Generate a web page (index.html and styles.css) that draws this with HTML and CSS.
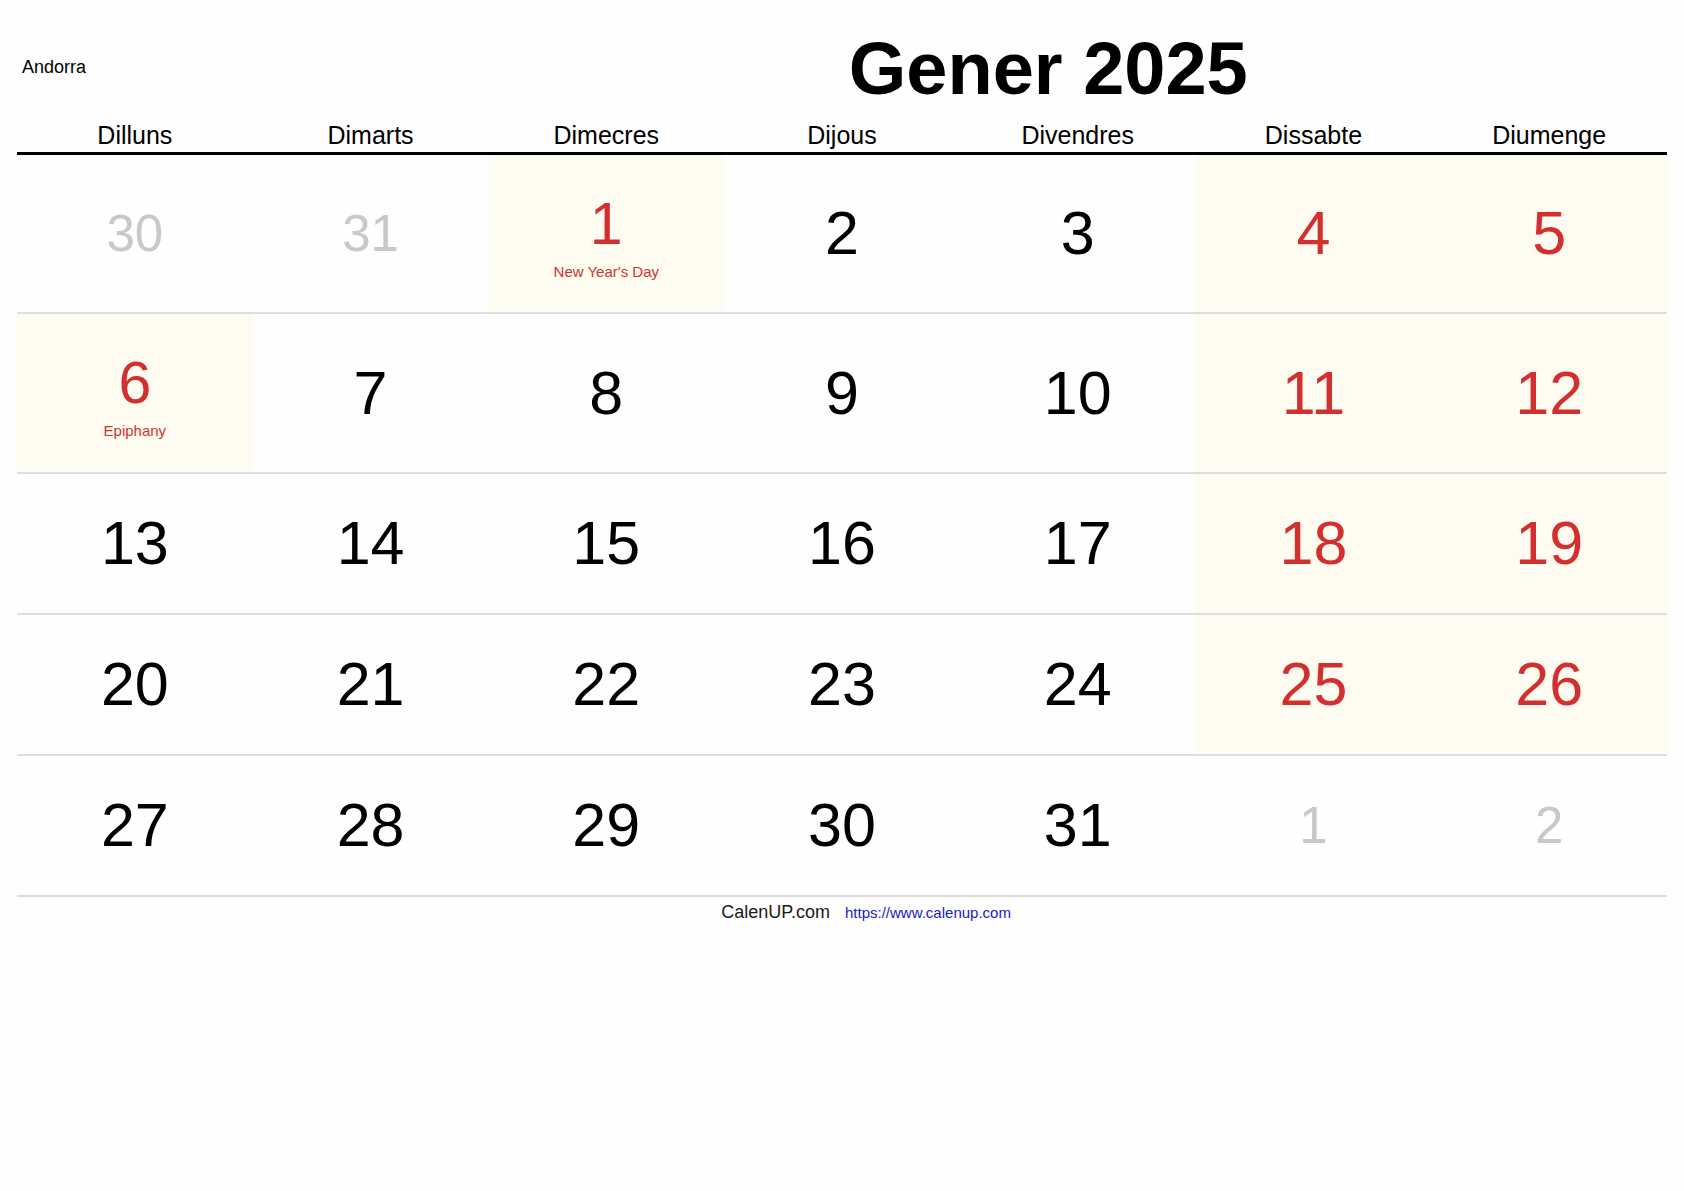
FILE: index.html
```html
<!DOCTYPE html>
<html lang="ca">
<head>
<meta charset="utf-8">
<title>Gener 2025</title>
<link rel="stylesheet" href="styles.css">
</head>
<body>
<div class="page">
  <header class="top">
    <div class="country">Andorra</div>
    <h1 class="title">Gener 2025</h1>
  </header>
  <div class="weekdays">
    <div>Dilluns</div><div>Dimarts</div><div>Dimecres</div><div>Dijous</div><div>Divendres</div><div>Dissabte</div><div>Diumenge</div>
  </div>
  <div class="week tall">
    <div class="day other"><span class="num">30</span></div>
    <div class="day other"><span class="num">31</span></div>
    <div class="day holiday"><span class="num">1</span><span class="label">New Year's Day</span></div>
    <div class="day"><span class="num">2</span></div>
    <div class="day"><span class="num">3</span></div>
    <div class="day weekend"><span class="num">4</span></div>
    <div class="day weekend"><span class="num">5</span></div>
  </div>
  <div class="week tall2">
    <div class="day holiday"><span class="num">6</span><span class="label">Epiphany</span></div>
    <div class="day"><span class="num">7</span></div>
    <div class="day"><span class="num">8</span></div>
    <div class="day"><span class="num">9</span></div>
    <div class="day"><span class="num">10</span></div>
    <div class="day weekend"><span class="num">11</span></div>
    <div class="day weekend"><span class="num">12</span></div>
  </div>
  <div class="week">
    <div class="day"><span class="num">13</span></div>
    <div class="day"><span class="num">14</span></div>
    <div class="day"><span class="num">15</span></div>
    <div class="day"><span class="num">16</span></div>
    <div class="day"><span class="num">17</span></div>
    <div class="day weekend"><span class="num">18</span></div>
    <div class="day weekend"><span class="num">19</span></div>
  </div>
  <div class="week">
    <div class="day"><span class="num">20</span></div>
    <div class="day"><span class="num">21</span></div>
    <div class="day"><span class="num">22</span></div>
    <div class="day"><span class="num">23</span></div>
    <div class="day"><span class="num">24</span></div>
    <div class="day weekend"><span class="num">25</span></div>
    <div class="day weekend"><span class="num">26</span></div>
  </div>
  <div class="week">
    <div class="day"><span class="num">27</span></div>
    <div class="day"><span class="num">28</span></div>
    <div class="day"><span class="num">29</span></div>
    <div class="day"><span class="num">30</span></div>
    <div class="day"><span class="num">31</span></div>
    <div class="day other"><span class="num">1</span></div>
    <div class="day other"><span class="num">2</span></div>
  </div>
  <footer class="footer">
    <span class="brand">CalenUP.com</span>
    <a class="link" href="https://www.calenup.com">https://www.calenup.com</a>
  </footer>
</div>
</body>
</html>
```
FILE: styles.css
```css
html, body {
  margin: 0;
  padding: 0;
  background: #fefefe;
}
body {
  font-family: "Liberation Sans", Arial, Helvetica, sans-serif;
  color: #000;
  width: 1684px;
  height: 1191px;
  overflow: hidden;
}
.page {
  padding: 0 17px;
}
.top {
  display: grid;
  grid-template-columns: 1fr 3fr;
  align-items: center;
  padding-top: 32px;
}
.country {
  font-size: 18px;
  line-height: 18px;
  padding-left: 5px;
  margin-bottom: 4px;
}
.title {
  margin: 0;
  text-align: center;
  font-size: 74px;
  line-height: 74px;
  font-weight: bold;
  color: #000;
}
.weekdays {
  display: grid;
  grid-template-columns: repeat(7, 1fr);
  margin-top: 17px;
  padding-bottom: 4px;
  border-bottom: 3px solid #000;
  font-size: 25px;
  line-height: 25px;
  text-align: center;
}
.week {
  display: grid;
  grid-template-columns: repeat(7, 1fr);
  height: 139px;
  border-bottom: 2px solid #dedede;
}
.week.tall {
  height: 157px;
}
.week.tall2 {
  height: 158px;
}
.day {
  display: flex;
  flex-direction: column;
  align-items: center;
  justify-content: center;
  color: #000;
}
.num {
  font-size: 61px;
  line-height: 61px;
}
.day.weekend {
  background: #fefbf0;
  color: #d32f2f;
}
.day.holiday {
  background: #fefbf0;
  color: #d32f2f;
  padding-top: 8px;
}
.day.holiday .num {
  font-size: 59px;
  line-height: 59px;
}
.label {
  font-size: 15px;
  line-height: 18px;
  margin-top: 9px;
  color: #cc3535;
}
.day.other {
  color: #c8c8c8;
}
.day.other .num {
  font-size: 51px;
  line-height: 51px;
}
.footer {
  display: grid;
  grid-template-columns: 1fr 1fr;
  align-items: baseline;
  padding-top: 5px;
}
.brand {
  text-align: right;
  padding-right: 12px;
  font-size: 18px;
  color: #1a1a1a;
}
.link {
  padding-left: 3px;
  font-size: 15px;
  color: #1a1ac8;
  text-decoration: none;
}
```
